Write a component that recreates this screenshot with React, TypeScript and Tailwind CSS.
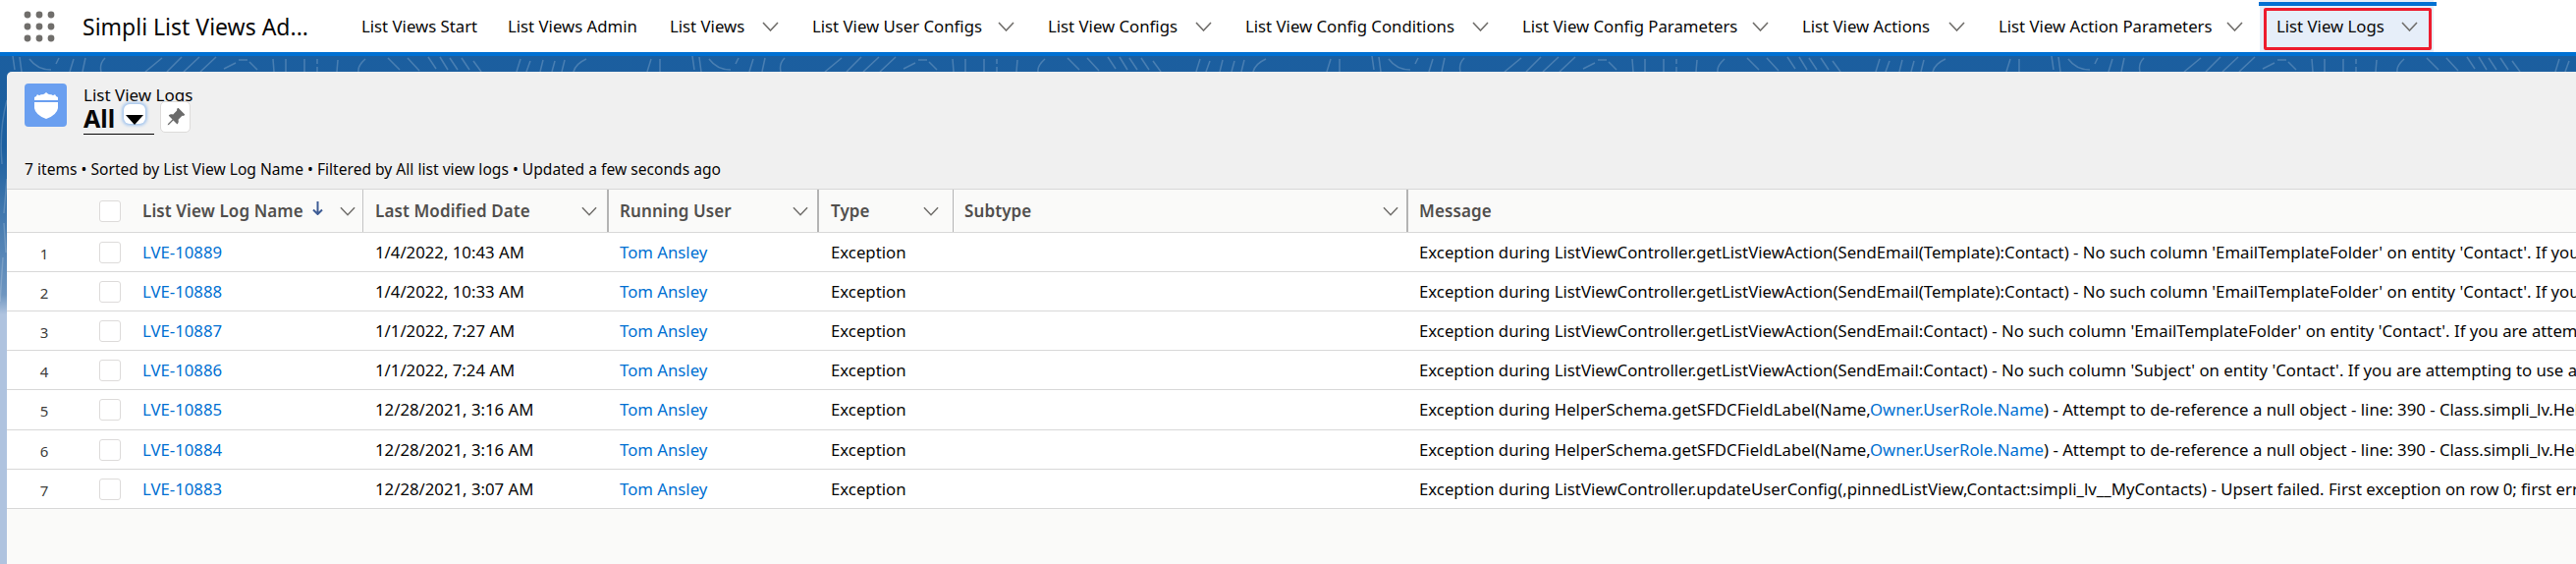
import { BsPinAngleFill } from 'react-icons/bs';

const navItems = [
  { label: 'List Views Start', width: 'w-[149px]' },
  { label: 'List Views Admin', width: 'w-[165px]' },
  { label: 'List Views', width: 'w-[145px]', menu: true },
  { label: 'List View User Configs', width: 'w-[240px]', menu: true },
  { label: 'List View Configs', width: 'w-[201px]', menu: true },
  { label: 'List View Config Conditions', width: 'w-[282px]', menu: true },
  { label: 'List View Config Parameters', width: 'w-[285px]', menu: true },
  { label: 'List View Actions', width: 'w-[200px]', menu: true },
  { label: 'List View Action Parameters', width: 'w-[283px]', menu: true },
];

const columns = [
  { label: 'List View Log Name', width: 'w-[232px] pl-[7px]', sorted: true, divider: 'border-r border-[#c4c4c4]', chevron: 'mr-[7px]' },
  { label: 'Last Modified Date', width: 'w-[250px] pl-[12px]', divider: 'border-r-2 border-[#b4b4b4]', chevron: 'mr-[10px]' },
  { label: 'Running User', width: 'w-[214px] pl-[11px]', divider: 'border-r-2 border-[#b4b4b4]', chevron: 'mr-[9px]' },
  { label: 'Type', width: 'w-[137px] pl-[12px]', divider: 'border-r border-[#b4b4b4]', chevron: 'mr-[14px]' },
  { label: 'Subtype', width: 'w-[463px] pl-[11px]', divider: 'border-r-2 border-[#b4b4b4]', chevron: 'mr-[8px]' },
];

const ifYou = " - No such column 'EmailTemplateFolder' on entity 'Contact'. If you are attempting to use a custom field, be sure to append the '__c' after the custom field name.";
const deref = ' - Attempt to de-reference a null object - line: 390 - Class.simpli_lv.HelperSchema.getSFDCFieldLabel';

const rows = [
  { id: 'LVE-10889', date: '1/4/2022, 10:43 AM', height: 'h-[40px]', msg: 'Exception during ListViewController.getListViewAction(SendEmail(Template):Contact)' + ifYou },
  { id: 'LVE-10888', date: '1/4/2022, 10:33 AM', height: 'h-[40px]', msg: 'Exception during ListViewController.getListViewAction(SendEmail(Template):Contact)' + ifYou },
  { id: 'LVE-10887', date: '1/1/2022, 7:27 AM', height: 'h-[40px]', msg: 'Exception during ListViewController.getListViewAction(SendEmail:Contact)' + ifYou },
  { id: 'LVE-10886', date: '1/1/2022, 7:24 AM', height: 'h-[40px]', msg: "Exception during ListViewController.getListViewAction(SendEmail:Contact) - No such column 'Subject' on entity 'Contact'. If you are attempting to use a custom field, be sure to append the '__c'" },
  { id: 'LVE-10885', date: '12/28/2021, 3:16 AM', height: 'h-[41px]', link: true },
  { id: 'LVE-10884', date: '12/28/2021, 3:16 AM', height: 'h-[40px]', link: true },
  { id: 'LVE-10883', date: '12/28/2021, 3:07 AM', height: 'h-[40px]', msg: 'Exception during ListViewController.updateUserConfig(,pinnedListView,Contact:simpli_lv__MyContacts) - Upsert failed. First exception on row 0; first error: DUPLICATE_VALUE' },
];

function Chevron({ className }: { className: string }) {
  return (
    <svg viewBox="0 0 17 10" fill="none" stroke="#706e6b" strokeWidth="1.6" className={className}>
      <path d="M1 1 L8.5 9 L16 1" />
    </svg>
  );
}

function AppGrid() {
  const dots = [6, 18, 30];
  return (
    <svg width="32" height="32" viewBox="0 0 32 32" fill="#706e6b" className="ml-[24px] mr-[28px] shrink-0">
      {dots.map((y) =>
        dots.map((x) => <circle key={`${x}-${y}`} cx={x - 2} cy={y - 2} r="3.4" />)
      )}
    </svg>
  );
}

function Backdrop() {
  return (
    <svg className="absolute left-0 top-[57px] w-full h-[517px]" fill="none">
      <defs>
        <pattern id="wave" width="692" height="16" patternUnits="userSpaceOnUse">
          <path
            stroke="#ffffff"
            strokeOpacity="0.2"
            strokeWidth="1.5"
            d="M13 0L15 14M20 1L22 16M30 3Q38 14 52 14M60 2L57 8M75 3L71 16M87 2L84 16M107 2Q101 8 103 16M165 2L148 16M185 1L170 16M203 1L187 16M220 1L204 16M228 13L240 7M243 4L252 4M254 6L262 14M278 3L279 16M291 3L291 16M310 3L310 16M323 3L323 8M323 11L323 16M344 4L343 16M372 3Q364 10 365 16M395 2L407 14M415 2L427 15M436 1L444 13M448 1L456 14M458 2L466 14M470 2L478 14M482 5L490 16M530 3L526 16M540 5L536 16M553 4L550 16M565 5L562 16M575 4L572 16M597 3Q586 8 584 16M663 3L659 16M672 3L672 16"
          />
        </pattern>
      </defs>
      <rect width="100%" height="16" fill="url(#wave)" />
      <path d="M7 45 Q-1 75 2 110 M7 125 L4 160 M4 170 L6 200 M3 205 L0 250" stroke="#ffffff" strokeOpacity="0.18" strokeWidth="1.5" />
    </svg>
  );
}

function Checkbox() {
  return <div className="w-[22px] h-[22px] rounded-[3px] border border-[#dddbda] bg-white" />;
}

function Message({ row }: { row: (typeof rows)[number] }) {
  if (row.link) {
    return (
      <>
        Exception during HelperSchema.getSFDCFieldLabel(Name,
        <span className="text-[#0070d2]">Owner.UserRole.Name</span>){deref}
      </>
    );
  }
  return <>{row.msg}</>;
}

export default function App() {
  return (
    <div
      className="relative h-screen w-full overflow-hidden bg-[linear-gradient(to_bottom,#1b5e9f_0px,#1c5f9f_150px,#6f96c0_300px,#afc3df_320px,#afc3df_100%)] text-[#080707] font-['Noto_Sans',sans-serif]"
    >
      <Backdrop />

      <header className="relative flex h-[57px] items-center border-b-4 border-[#0070d2] bg-white">
        <AppGrid />
        <div className="w-[284px] shrink-0 text-[23px] leading-[28px] whitespace-nowrap">
          Simpli List Views Ad...
        </div>
        {navItems.map((item) => (
          <div key={item.label} className={`flex shrink-0 items-center ${item.width}`}>
            <span className="text-[16.75px] whitespace-nowrap">{item.label}</span>
            {item.menu && <Chevron className="ml-auto mr-[34px] w-[17px] h-[10px]" />}
          </div>
        ))}
        <div className="relative flex h-[53px] w-[177px] shrink-0 -ml-[17px] items-center bg-[#e6eef9] pl-[17px]">
          <div className="absolute -left-[1px] -right-[3px] top-[2px] h-[4px] bg-[#0070d2]" />
          <div className="absolute left-[4px] right-[2px] top-[8px] bottom-[2px] rounded-[2px] border-[3px] border-[#ed1c2e]" />
          <span className="text-[16.75px] whitespace-nowrap">List View Logs</span>
          <Chevron className="ml-auto mr-[16px] w-[17px] h-[10px]" />
        </div>
      </header>

      <main className="relative ml-[7px] mt-[16px] h-[501px] rounded-tl-[5px] bg-[#f0f0f0] flex flex-col">
        <section className="h-[119px] shrink-0 flex flex-col justify-between">
          <div className="flex items-start pl-[18px] pt-[12px]">
            <div className="flex h-[44px] w-[43px] items-center justify-center rounded-[4px] bg-[#6a9ff0]">
              <svg width="26" height="28" viewBox="0 0 26 28" fill="#ffffff">
                <path d="M1 6 Q3 6 4 3 Q6 5 8 3 Q10 4 13 1 Q16 4 18 3 Q20 5 22 3 Q23 6 25 6 L25 9 L1 9 Z" />
                <path d="M1 11 L25 11 L25 17 Q24 24 13 28 Q2 24 1 17 Z" />
              </svg>
            </div>
            <div className="ml-[17px] mt-[1px]">
              <div className="h-[20px] overflow-hidden text-[17px] leading-[21px]">List View Logs</div>
              <div className="flex items-start">
                <div className="flex h-[31px] w-[72px] items-start border-b border-[#080707]">
                  <span className="text-[25px] leading-[28px] font-bold">All</span>
                  <div className="relative ml-[9px] h-[20px] w-[22px] rounded-[6px] bg-white shadow-[0_0_3px_2px_#a8c8ee]">
                    <div className="absolute left-[2px] top-[11px] h-0 w-0 border-x-[9px] border-t-[10px] border-x-transparent border-t-black" />
                  </div>
                </div>
                <div className="-mt-[3px] ml-[6px] flex h-[32px] w-[31px] items-center justify-center rounded-[5px] border border-[#dddbda] bg-white">
                  <BsPinAngleFill className="w-[20px] h-[20px] text-[#6b6b6b]" />
                </div>
              </div>
            </div>
          </div>
          <div className="pl-[18px] pb-[11px] text-[15.6px] leading-[18px] whitespace-nowrap">
            7 items • Sorted by List View Log Name • Filtered by All list view logs • Updated a few seconds ago
          </div>
        </section>

        <div className="flex-1 bg-[#fafaf9] overflow-hidden">
          <div className="flex h-[45px] border-y border-[#d8d8d8] items-stretch">
            <div className="w-[76px] shrink-0" />
            <div className="flex w-[55px] shrink-0 items-center pl-[18px]">
              <Checkbox />
            </div>
            {columns.map((col) => (
              <div key={col.label} className={`flex shrink-0 items-center ${col.width} ${col.divider}`}>
                <span className="text-[17px] font-semibold text-[#514f4d] tracking-[0.1px] whitespace-nowrap">{col.label}</span>
                {col.sorted && (
                  <svg width="11" height="14" viewBox="0 0 11 14" fill="none" stroke="#3e5c95" strokeWidth="2" className="ml-[9px] -mt-[6px]">
                    <path d="M5.5 0V13M1 8.5L5.5 13L10 8.5" />
                  </svg>
                )}
                <Chevron className={`ml-auto w-[16px] h-[10px] ${col.chevron}`} />
              </div>
            ))}
            <div className="flex items-center pl-[11px]">
              <span className="text-[17px] font-semibold text-[#514f4d] tracking-[0.1px]">Message</span>
            </div>
          </div>

          {rows.map((row, i) => (
            <div key={row.id} className={`flex items-center border-b border-[#d8d8d8] bg-white ${row.height}`}>
              <div className="w-[76px] shrink-0 pt-[3px] text-center text-[15px] text-[#3e3e3c]">{i + 1}</div>
              <div className="flex w-[55px] shrink-0 items-center pl-[18px]">
                <Checkbox />
              </div>
              <div className="w-[232px] shrink-0 pl-[7px] text-[16.75px] text-[#0070d2]">{row.id}</div>
              <div className="w-[250px] shrink-0 pl-[12px] text-[16.75px]">{row.date}</div>
              <div className="w-[214px] shrink-0 pl-[11px] text-[16.75px] text-[#0070d2]">Tom Ansley</div>
              <div className="w-[137px] shrink-0 pl-[12px] text-[16.75px]">Exception</div>
              <div className="w-[463px] shrink-0" />
              <div className="flex-1 overflow-hidden whitespace-nowrap pl-[11px] text-[16.75px]">
                <Message row={row} />
              </div>
            </div>
          ))}
        </div>
      </main>
    </div>
  );
}
